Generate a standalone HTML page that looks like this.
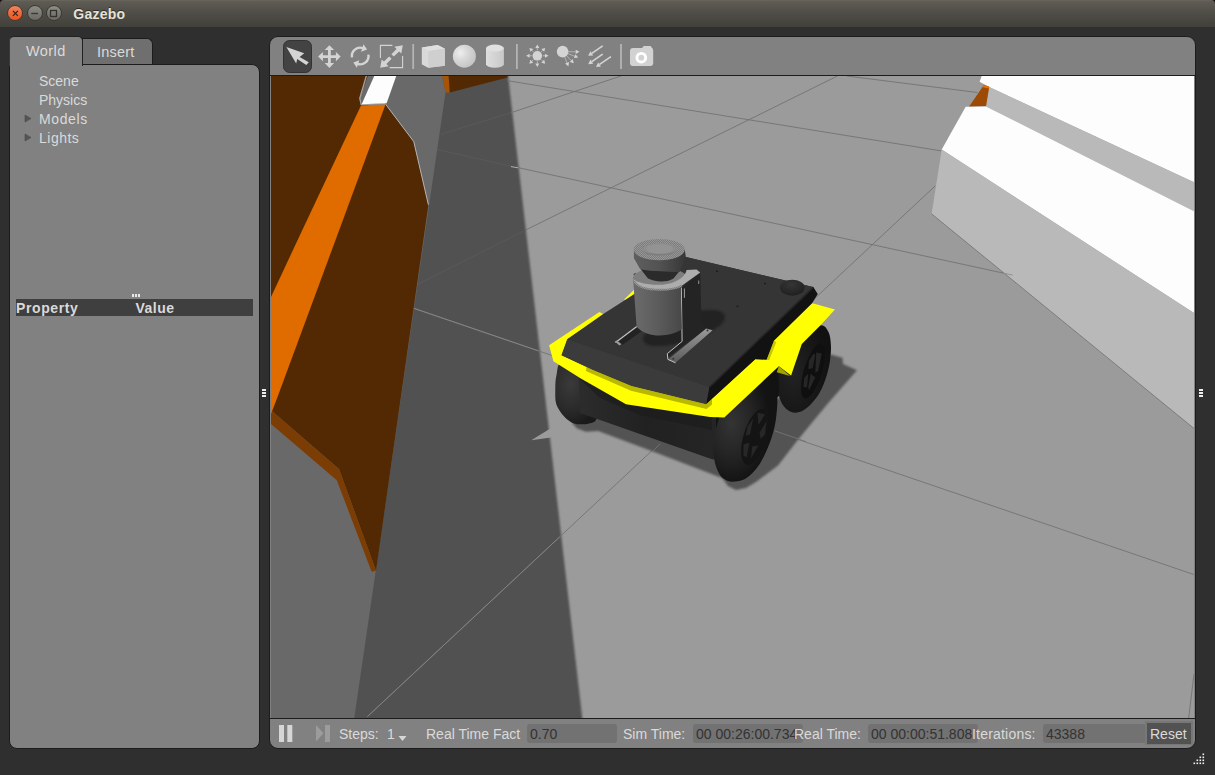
<!DOCTYPE html>
<html>
<head>
<meta charset="utf-8">
<title>Gazebo</title>
<style>
html,body{margin:0;padding:0;}
body{width:1215px;height:775px;overflow:hidden;background:#2f2f2f;position:relative;font-family:"Liberation Sans",sans-serif;color:#dadada;}
.abs{position:absolute;}
#titlebar{left:0;top:0;width:1215px;height:27px;background:linear-gradient(#6a685e 0px,#5e5c54 1.5px,#54524b 9px,#494842 18px,#41403b 27px);border-radius:4px 4px 0 0;}
#corners{left:0;top:0;width:1215px;height:8px;background:#1e0a14;}
#title{left:73.3px;top:5.8px;font-weight:bold;font-size:14px;color:#e6e2d8;letter-spacing:0.25px;line-height:17px;text-shadow:0 -1px 0 rgba(0,0,0,.45);}
.wb{width:16px;height:16px;border-radius:50%;top:5.4px;box-sizing:border-box;}
.t{white-space:nowrap;line-height:16px;font-size:14px;}
#leftpanel{left:9px;top:64px;width:251px;height:685px;background:#818181;border:1px solid #1c1c1c;border-radius:0 8px 8px 8px;box-sizing:border-box;}
#tabworld{left:9px;top:36px;width:74px;height:30px;background:#818181;border:1px solid #222;border-left-color:#3a3a3a;border-bottom:none;border-radius:5px 5px 0 0;box-sizing:border-box;}
#tabinsert{left:82px;top:38px;width:71px;height:26px;background:#6f6f6f;border:1px solid #1c1c1c;border-bottom:none;border-radius:0 6px 0 0;box-sizing:border-box;}
#render{left:269px;top:36px;width:927px;height:713px;background:#818181;border:1px solid #1c1c1c;border-radius:9px;box-sizing:border-box;}
.fld{background:#727272;border-radius:3px;height:19px;top:724px;color:#333;overflow:hidden;}
.fld span{position:absolute;left:3px;top:2px;}
</style>
</head>
<body>
<div id="corners" class="abs"></div>
<div id="titlebar" class="abs"></div>
<div class="abs wb" style="left:7.4px;background:linear-gradient(#f28560,#ee6a3c 50%,#ec5620);border:1px solid #4a3a30;"></div>
<div class="abs wb" style="left:26.6px;background:linear-gradient(#8e8d86,#6a6962);border:1px solid #3a3934;"></div>
<div class="abs wb" style="left:45.5px;background:linear-gradient(#8e8d86,#6a6962);border:1px solid #3a3934;"></div>
<svg class="abs" style="left:0;top:0" width="70" height="27" viewBox="0 0 70 27">
<path d="M12.9 10.9 L17.9 15.9 M17.9 10.9 L12.9 15.9" stroke="#3c241c" stroke-width="1.3" fill="none"/>
<path d="M31.2 13.5 H38" stroke="#3a3934" stroke-width="1.4" fill="none"/>
<rect x="50.5" y="10.5" width="6" height="6" stroke="#33322d" stroke-width="1.3" fill="none"/>
</svg>
<div id="title" class="abs">Gazebo</div>

<!-- left panel -->
<div id="leftpanel" class="abs"></div>
<div id="tabinsert" class="abs"></div>
<div id="tabworld" class="abs"></div>
<div class="abs t" id="tWorld" style="left:26px;top:43px;font-size:14.5px;letter-spacing:0.4px;">World</div>
<div class="abs t" id="tInsert" style="left:97px;top:44px;font-size:14.5px;letter-spacing:0.2px;">Insert</div>
<div class="abs t" id="tScene" style="left:39px;top:73px;">Scene</div>
<div class="abs t" id="tPhysics" style="left:39px;top:92px;">Physics</div>
<div class="abs t" id="tModels" style="left:39px;top:111px;letter-spacing:0.6px;">Models</div>
<div class="abs t" id="tLights" style="left:39px;top:130px;letter-spacing:0.5px;">Lights</div>
<svg class="abs" style="left:20px;top:110px" width="16" height="36" viewBox="0 0 16 36">
<path d="M5 5 L11 8.5 L5 12Z M5 24 L11 27.5 L5 31Z" fill="#555" stroke="#4a4a4a" stroke-width="0.6"/>
</svg>
<div class="abs" style="left:131.5px;top:294px;width:2px;height:3px;background:#e8e8e8;box-shadow:3px 0 0 #e8e8e8,6px 0 0 #e8e8e8;"></div>
<div class="abs" style="left:16px;top:299px;width:237px;height:17px;background:#3f3f3f;"></div>
<div class="abs t" id="tProperty" style="left:16px;top:300px;font-weight:bold;letter-spacing:0.6px;">Property</div>
<div class="abs t" id="tValue" style="left:135.5px;top:300px;font-weight:bold;letter-spacing:0.5px;">Value</div>

<!-- splitter handles -->
<div class="abs" style="left:262px;top:389px;width:4px;height:2px;background:#eee;box-shadow:0 3px 0 #eee,0 6px 0 #eee;"></div>
<div class="abs" style="left:1199px;top:389px;width:4px;height:2px;background:#eee;box-shadow:0 3px 0 #eee,0 6px 0 #eee;"></div>

<!-- render widget -->
<div id="render" class="abs"></div>

<svg class="abs" style="left:271px;top:76px" width="923" height="642" viewBox="271 76 923 642" shape-rendering="auto">
<defs>
<filter id="shb" x="-5%" y="-5%" width="110%" height="110%"><feGaussianBlur stdDeviation="1.3 0.1"/></filter>
<linearGradient id="shEdge" gradientUnits="userSpaceOnUse" x1="0" y1="0" x2="4" y2="0"><stop offset="0" stop-color="#525252"/><stop offset="1" stop-color="#9b9b9b"/></linearGradient>
</defs>
<!-- ground -->
<rect x="271" y="76" width="923" height="642" fill="#9b9b9b"/>
<!-- shadow -->
<polygon points="420,56 505.8,56 584.6,738 330,738 420,92.5" fill="#515151" filter="url(#shb)"/>
<polygon points="531.2,440.2 550,428.8 553,428.5 553,437.2" fill="#9b9b9b"/>
<!-- grid lines -->
<g stroke="#737373" stroke-width="0.9" fill="none">
<line x1="507.5" y1="80.7" x2="941.2" y2="150.9"/>
<line x1="510.7" y1="112.8" x2="621" y2="76"/>
<line x1="525.7" y1="230" x2="837.4" y2="76"/>
<line x1="517" y1="167.4" x2="1013" y2="275.2"/>
<line x1="847" y1="76" x2="977.5" y2="92.5"/>
<line x1="935.1" y1="186" x2="367.4" y2="716.6"/>
<line x1="412.3" y1="307.8" x2="1194" y2="574.6"/>
<line x1="1188.7" y1="718" x2="1194" y2="674"/>
</g>
<g stroke="#5a5a5a" stroke-width="0.9" fill="none">
<line x1="441.2" y1="134.2" x2="510.7" y2="112.8"/>
<line x1="415.5" y1="285.3" x2="525.7" y2="230"/>
<line x1="435.8" y1="149.2" x2="511" y2="166.2"/>
</g>
<line x1="511" y1="166.6" x2="518" y2="167.8" stroke="#b0b0b0" stroke-width="1"/>
<g stroke="#868686" stroke-width="0.9"><line x1="367.4" y1="716.6" x2="559.6" y2="537"/><line x1="412.3" y1="307.8" x2="538.3" y2="350.8"/></g>
<!-- mid grey -->
<polygon points="271,76 442.3,76 445.5,92.5 354.5,716.6 354.3,718 271,718" fill="#696969"/>
<!-- brown box -->
<polygon points="271,76 396.3,76 385.6,104.2 413.8,141.7 428.4,204.8 376,570.7 339,469 271,410.3" fill="#522902"/>
<polygon points="271,410.3 339,469 376,570.7 371.6,571.8 336.8,480.2 271,424" fill="#7c3d05"/>
<polyline points="385.6,104.2 413.8,141.7 428.4,204.8" fill="none" stroke="#b4b4b4" stroke-width="1"/>
<!-- orange band -->
<polygon points="361,105.5 385.6,104.2 337.4,235 276.4,400 271,414 271,297 300,235" fill="#e06c00"/>
<!-- white quad top -->
<polygon points="367.8,76 374.5,76 362,104 360,98" fill="#6a6a6a"/>
<polyline points="366.6,75 359.8,98.2 361.2,104.6 385.6,103.8" fill="none" stroke="#a0a0a0" stroke-width="1.4"/>
<polygon points="374.2,76 396.3,76 386.6,103.2 361.6,104.2" fill="#fdfdfd"/>
<!-- top orange sliver + brown triangle -->
<polygon points="442.3,76 448.7,76 449.8,92.5 445.5,92.5" fill="#a85306"/>
<polygon points="448.7,76 507.5,76 507.5,77.5 449.8,92.5" fill="#522902"/>
<!-- white boxes right -->
<polygon points="981.7,76 1194,76 1194,182.3 989.2,87.1 979.6,81.8" fill="#fdfdfd"/>
<polygon points="989.2,87.1 1194,182.3 1194,211.2 986,106.4" fill="#b9b9b9"/>
<polygon points="983.9,85 989.2,86.7 986,106 968.9,106.8" fill="#9c4a04"/>
<polygon points="983.9,85 989.2,86.7 988.9,88.5 982.5,87.2" fill="#e87000"/>
<polygon points="965.7,106.8 986,106.4 1194,211.2 1194,313 941.7,149.6" fill="#fdfdfd"/>
<polygon points="941.7,149.6 1194,313 1194,428.5 931.6,213.9" fill="#b9b9b9"/>
<line x1="931.6" y1="213.9" x2="1194" y2="428.5" stroke="#777" stroke-width="0.9"/>
<line x1="1003" y1="273" x2="1012.8" y2="275.2" stroke="#8c8c8c" stroke-width="0.9"/>
<defs>
<filter id="b1" x="-10%" y="-10%" width="120%" height="120%"><feGaussianBlur stdDeviation="1.1"/></filter>
<filter id="b2" x="-20%" y="-20%" width="140%" height="140%"><feGaussianBlur stdDeviation="1.6"/></filter>
<linearGradient id="gBody" x1="0" y1="0" x2="1" y2="0"><stop offset="0" stop-color="#2c2c2c"/><stop offset="0.5" stop-color="#212121"/><stop offset="1" stop-color="#252525"/></linearGradient>
<linearGradient id="gCyl" x1="0" y1="0" x2="1" y2="0"><stop offset="0" stop-color="#6b6b6b"/><stop offset="0.45" stop-color="#5e5e5e"/><stop offset="1" stop-color="#484848"/></linearGradient>
<linearGradient id="gCap" x1="0" y1="0" x2="1" y2="0"><stop offset="0" stop-color="#5e5e5e"/><stop offset="0.5" stop-color="#525252"/><stop offset="1" stop-color="#363636"/></linearGradient>
<linearGradient id="gFoot" x1="0" y1="0" x2="0" y2="1"><stop offset="0" stop-color="#9a9a9a"/><stop offset="1" stop-color="#5c5c5c"/></linearGradient>
<radialGradient id="gGps" cx="0.45" cy="0.3" r="0.7"><stop offset="0" stop-color="#353535"/><stop offset="1" stop-color="#202020"/></radialGradient>
<radialGradient id="gTyreF" cx="0.28" cy="0.42" r="0.6"><stop offset="0" stop-color="#343434"/><stop offset="0.55" stop-color="#242424"/><stop offset="1" stop-color="#131313"/></radialGradient>
<radialGradient id="gTyreL" cx="0.35" cy="0.35" r="0.7"><stop offset="0" stop-color="#3a3a3a"/><stop offset="0.6" stop-color="#2a2a2a"/><stop offset="1" stop-color="#191919"/></radialGradient>
<radialGradient id="gTyreR" cx="0.3" cy="0.55" r="0.7"><stop offset="0" stop-color="#222"/><stop offset="1" stop-color="#111"/></radialGradient>
<pattern id="hatch" width="2" height="2" patternUnits="userSpaceOnUse"><rect width="2" height="2" fill="#7c7c7c"/><rect width="1" height="1" fill="#969696"/><rect x="1" y="1" width="1" height="1" fill="#969696"/></pattern>
</defs>
<g id="robot">
<!-- ground shadows -->
<g fill="#535353" filter="url(#b1)">
<polygon points="572,423 577,428.5 586,431.8 598.2,431 653,451.5 722,478 728,486 736,490 746,488 756,482 778,465.5 797,441 812.5,422 828.5,402.8 857,370.2 843,364 842.5,357.8 830.7,354.6 800,380 740,430 600,400"/>
</g>
<line x1="774.6" y1="430.8" x2="806" y2="441.6" stroke="#747474" stroke-width="0.9"/>
<line x1="652.8" y1="451.4" x2="660" y2="443.8" stroke="#747474" stroke-width="0.9"/>
<!-- rear right wheel -->
<path d="M800.0 335.0 C806.8 329.2 815.8 325.7 820.5 325.2 C825.2 324.7 826.8 328.8 828.5 332.1 C830.2 335.4 830.6 340.4 830.9 345.0 C831.2 349.6 830.8 354.8 830.1 360.0 C829.4 365.2 828.2 370.6 826.5 376.0 C824.8 381.4 822.4 387.6 820.0 392.1 C817.6 396.6 814.8 399.9 812.0 403.0 C809.2 406.1 806.1 408.9 803.0 410.5 C799.9 412.1 796.4 413.2 793.2 412.5 C790.0 411.8 786.5 409.6 784.0 406.5 C781.5 403.4 779.7 398.8 778.5 394.0 C777.3 389.2 776.8 383.7 777.0 378.0 C777.2 372.3 776.2 367.2 780.0 360.0 C783.8 352.8 793.2 340.8 800.0 335.0Z" fill="url(#gTyreR)"/>
<ellipse cx="813" cy="371" rx="9" ry="28.5" transform="rotate(17 813 371)" fill="#0f0f0f"/>
<g fill="#262626">
<polygon points="808.9,360.9 813.5,353.5 815.3,355.3 812.6,368.2 808.3,369.1"/>
<polygon points="816.2,352.6 821.8,353.5 818.1,371 815.3,372.8"/>
<polygon points="804.3,377.4 808.3,373.8 807,387.6 803.3,386.7"/>
<polygon points="810.7,373.8 815.3,377.4 808.9,390.4 808.3,386.7"/>
</g>
<!-- front left wheel -->
<path d="M562.0 362.0 C557.2 362.8 557.6 370.4 556.5 375.0 C555.4 379.6 555.3 384.5 555.3 389.4 C555.3 394.3 554.9 399.8 556.3 404.2 C557.7 408.6 561.4 413.2 563.7 416.1 C566.0 419.0 567.8 420.1 570.0 421.5 C572.2 422.9 573.9 423.9 577.1 424.2 C580.3 424.5 585.8 424.4 589.0 423.5 C592.2 422.6 594.9 422.9 596.4 419.0 C597.9 415.1 599.9 408.2 598.0 400.0 C596.1 391.8 591.0 376.3 585.0 370.0 C579.0 363.7 566.8 361.2 562.0 362.0Z" fill="url(#gTyreL)"/>
<!-- body -->
<polygon points="712,400 778,366 779,396 714,446" fill="#121212"/>
<polygon points="578.6,370 580,413.1 712,459.3 716,459.5 716,400" fill="url(#gBody)"/>
<polygon points="578.6,378 626,404.3 712,417.5 712,430 640,415 600,398" fill="#1c1c1c" opacity="0.7"/>
<!-- front right wheel -->
<path d="M740.0 395.0 C732.0 400.3 726.2 405.0 722.0 412.0 C717.8 419.0 715.8 429.1 714.5 436.8 C713.2 444.5 713.4 452.1 714.1 458.2 C714.8 464.3 717.1 469.6 718.9 473.2 C720.7 476.8 722.7 478.1 725.0 479.5 C727.3 480.9 729.3 481.9 732.8 481.7 C736.2 481.5 741.4 481.2 745.7 478.5 C750.0 475.8 754.6 471.4 758.5 465.7 C762.4 460.0 766.3 451.8 769.2 444.3 C772.1 436.8 774.4 429.4 775.7 420.7 C777.0 412.0 778.1 398.9 777.1 392.1 C776.1 385.3 776.2 379.5 770.0 380.0 C763.8 380.5 748.0 389.7 740.0 395.0Z" fill="url(#gTyreF)"/>
<ellipse cx="755" cy="437" rx="11.5" ry="29" transform="rotate(17 755 437)" fill="#141414"/>
<g fill="#272727">
<polygon points="753.2,418.6 750,434.6 745.7,435.7 747.8,426"/>
<polygon points="757.5,412.7 765,414.3 758.5,425"/>
<polygon points="766.6,421.2 765,434.6 760.7,438.9 759.6,432.5"/>
<polygon points="743.5,444.3 749.4,442.7 746.8,457.1 743.5,456"/>
<polygon points="752.1,446.4 758.5,445.3 751,458.2"/>
</g>
<!-- yellow -->
<polygon points="549.1,345.2 599.4,312 603.2,314.1 590,340 650,350 740,340 790,300 812.5,303.2 835,309.6 820.5,325.2 801.8,343.9 791.1,375.5 778.9,366.2 724.3,417.6 710,417.1 626,404.3 580,378 553.4,361.2" fill="#ffff00"/>
<polygon points="624.1,299.6 634.5,289.3 634.5,295 626,301" fill="#ffff00"/>
<polygon points="586,371 586.5,367 592.9,370 631.4,386.1 706.1,404.3 712,399 712,404.5 706.5,409 631,390.8 592,373.8" fill="#b9b900"/>
<polygon points="778.9,366.2 790.1,375.9 776.7,372.3" fill="#a4a400"/>
<polygon points="773.9,340.7 776.3,342 769.2,360.2 766.6,359.8" fill="#c8c800"/>
<!-- side band / plate -->
<polygon points="567.3,339.3 634.2,294.3 685.9,257.1 813.2,287.1 817.2,294.1 811.6,303 773.4,340.5 766.2,359.3 755.3,358.8 706.1,403.8 631.4,385.6 592.9,369.5 561.9,355.3" fill="#303030"/>
<polygon points="813.2,287.1 817.7,294.1 812.1,303.2 773.9,340.7 766.6,359.8 755.3,359.3 706.1,404.3 709.3,387.1" fill="#121212"/>
<polygon points="567.3,339.3 603.2,314.1 634.2,294.3 660,270 685.9,257.1 813.2,287.1 709.3,387.1" fill="#353535"/>
<polygon points="567.3,339.3 709.3,387.1 706.1,404.3 631.4,386.1 592.9,370 561.4,355.3" fill="#3b3b3b"/>
<line x1="813" y1="287.6" x2="709.6" y2="387" stroke="#262626" stroke-width="1.6"/>
<!-- gps -->
<ellipse cx="792.3" cy="287.7" rx="12.3" ry="8" fill="url(#gGps)"/>
<g fill="#1d1d1d"><rect x="716" y="270.6" width="2" height="1.4"/><rect x="736.4" y="305.6" width="2.2" height="1.4"/><rect x="764" y="282.8" width="2" height="1.4"/><rect x="704" y="322.6" width="1.6" height="1.6"/></g>
<!-- cylinder shadow on plate -->
<ellipse cx="684" cy="328" rx="43" ry="13.5" transform="rotate(-17 684 328)" fill="#242424" filter="url(#b1)"/>
<!-- bracket left leg -->
<polygon points="636.6,327 642,331 621.4,345.4 615,343" fill="#222"/>
<line x1="636.8" y1="326.6" x2="615.5" y2="342.6" stroke="#c4c4c4" stroke-width="1.2"/>
<polygon points="614.6,341.6 617,340.6 621.6,344.2 619.5,345.6" fill="#9a9a9a"/>
<!-- bracket right -->
<polygon points="681.6,287 700.3,273 701.4,322 706.2,328.6 668.5,357 667.1,353.7 682.1,341.4" fill="#242424"/>
<polygon points="706.2,328.6 712.6,330.2 675.5,362.8 668,359.5" fill="url(#gFoot)"/>
<polyline points="681.3,287.5 682.1,341.4 667.3,353.7 667.9,359.4 675.5,362.8" fill="none" stroke="#c2c2c2" stroke-width="1"/>
<line x1="684.4" y1="288.5" x2="684.4" y2="297.8" stroke="#b0b0b0" stroke-width="0.9"/>
<line x1="698.7" y1="280.5" x2="698.7" y2="284" stroke="#a0a0a0" stroke-width="0.9"/>
<circle cx="673.3" cy="358.7" r="1" fill="#333"/><circle cx="707.5" cy="330.6" r="1" fill="#333"/>
<!-- laser body -->
<path d="M633 277 L636.6 326.4 C642 333 652 335.6 659.6 335.5 C668 335.4 677 333 681.8 329 L680.8 283 Z" fill="url(#gCyl)"/>
<ellipse cx="660.2" cy="278.5" rx="27.3" ry="11" fill="#7e7e7e"/>
<path d="M633 279 C636 286.5 648 289.8 660 289.8 C670 289.8 678 288 682 285.5 L700.2 272.6 L696.5 269.6 L686.5 270 C686 276 676 284.5 660 284.8 C646 285 636 282 633 279Z" fill="#adadad"/>
<path d="M634 281.5 C638 287.5 648 289.8 660 289.8 C670 289.8 678 288 682 285.5" fill="none" stroke="url(#hatch)" stroke-width="2"/>
<line x1="633.6" y1="274.6" x2="635.5" y2="273.4" stroke="#2a2a2a" stroke-width="1"/>
<!-- laser cap -->
<path d="M639.5 267.5 L680 270.5 L673.5 278.5 C669 281 665 281.6 661.2 281.5 C656 281.4 651 280.4 647.8 278.3 Z" fill="#2b2b2b"/>
<path d="M633.9 250 L633.9 258.2 L640.3 269.2 C646 270.4 654 271 661 271.2 C668 271.6 675 272.2 679.6 272 L685.9 257.3 L684.8 250 Z" fill="url(#gCap)"/>
<ellipse cx="659.3" cy="249.6" rx="25.5" ry="10.7" fill="url(#hatch)"/>
<ellipse cx="659.6" cy="249.2" rx="17" ry="6.2" fill="#8c8c8c"/>
<path d="M642.8 250.2 C645 254.5 652 255.6 659.6 255.5 C668 255.4 674.5 254 676.4 250.4 C674 252.8 667 254 659.6 254 C652 254 645.5 253 642.8 250.2Z" fill="#7c7c7c"/>
<ellipse cx="659.6" cy="248.8" rx="13.5" ry="4.6" fill="#939393"/>
</g>

</svg>


<svg class="abs" style="left:270px;top:37px" width="400" height="38" viewBox="270 37 400 38">
<defs><radialGradient id="gSph" cx="0.33" cy="0.36" r="0.7"><stop offset="0" stop-color="#eeeeee"/><stop offset="0.45" stop-color="#d8d8d8"/><stop offset="1" stop-color="#c4c4c4"/></radialGradient><linearGradient id="gCy" x1="0" y1="0" x2="1" y2="0"><stop offset="0" stop-color="#dedede"/><stop offset="1" stop-color="#c8c8c8"/></linearGradient></defs>
<rect x="283.5" y="40.5" width="28" height="32" rx="6" ry="6" fill="#434343" stroke="#323232" stroke-width="1"/>
<polygon points="286.4,46.9 304.2,53.3 299.6,56.9 308.8,62.2 306.3,64.9 297.2,59 296.2,63.4" fill="#d4d4d4"/>
<polygon points="330.8,55.2 335.9,55.2 335.9,51.9 340.7,56.6 335.9,61.3 335.9,58.0 330.8,58.0 330.8,58.0 330.8,63.1 334.1,63.1 329.4,67.9 324.7,63.1 328.0,63.1 328.0,58.0 328.0,58.0 322.9,58.0 322.9,61.3 318.1,56.6 322.9,51.9 322.9,55.2 328.0,55.2 328.0,55.2 328.0,50.1 324.7,50.1 329.4,45.3 334.1,50.1 330.8,50.1 330.8,55.2" fill="#d4d4d4"/>
<path d="M352.0 57.4 A8.3 8.3 0 0 1 363.0 48.2" fill="none" stroke="#d4d4d4" stroke-width="2.4"/>
<path d="M368.4 54.6 A8.3 8.3 0 0 1 357.4 63.8" fill="none" stroke="#d4d4d4" stroke-width="2.4"/>
<polygon points="367.1,49.5 363.5,44.2 361.1,51.7" fill="#d4d4d4"/>
<polygon points="353.3,62.5 356.9,67.8 359.3,60.3" fill="#d4d4d4"/>
<path d="M380.4 57.9 V45.4 H392.4 M389.6 67.6 H402.6 V56.099999999999994" fill="none" stroke="#d4d4d4" stroke-width="1.1"/>
<polygon points="393.8,56.6 399.1,51.4 401.3,53.6 402.8,45.2 394.4,46.7 396.6,48.9 391.4,54.2" fill="#d4d4d4"/>
<polygon points="389.2,56.4 383.9,61.6 381.7,59.4 380.2,67.8 388.6,66.3 386.4,64.1 391.6,58.8" fill="#d4d4d4"/>
<rect x="412.3" y="44" width="1.8" height="25" fill="#b4b4b4"/>
<rect x="516.0" y="44" width="1.8" height="25" fill="#b4b4b4"/>
<rect x="620.1" y="44" width="1.8" height="25" fill="#b4b4b4"/>
<polygon points="421.9,47.5 437.7,45 444.9,48.7 444.9,65.7 428.4,67.7 421.9,64.2" fill="#d4d4d4"/>
<polygon points="421.9,47.5 437.7,45 444.9,48.7 428.4,51" fill="#dfdfdf"/>
<polygon points="421.9,47.5 428.4,51 428.4,67.7 421.9,64.2" fill="#d8d8d8"/>
<polygon points="428.4,51 444.9,48.7 444.9,65.7 428.4,67.7" fill="#cfcfcf"/>
<circle cx="464.4" cy="56.2" r="11.5" fill="url(#gSph)"/>
<path d="M486 48.1 V64.2 A8.95 3.5 0 0 0 503.9 64.2 V48.1Z" fill="url(#gCy)"/>
<ellipse cx="494.95" cy="48.1" rx="8.95" ry="3.5" fill="#e0e0e0"/>
<circle cx="537.3" cy="55.8" r="4.8" fill="#d4d4d4"/>
<line x1="542.8" y1="55.8" x2="545.0" y2="55.8" stroke="#d4d4d4" stroke-width="0.7"/><polygon points="548.5,55.8 545.0,57.8 545.0,53.8" fill="#d4d4d4"/>
<line x1="541.2" y1="59.7" x2="542.7" y2="61.2" stroke="#d4d4d4" stroke-width="0.7"/><polygon points="545.2,63.7 541.3,62.7 544.2,59.8" fill="#d4d4d4"/>
<line x1="537.3" y1="61.3" x2="537.3" y2="63.5" stroke="#d4d4d4" stroke-width="0.7"/><polygon points="537.3,67.0 535.3,63.5 539.3,63.5" fill="#d4d4d4"/>
<line x1="533.4" y1="59.7" x2="531.9" y2="61.2" stroke="#d4d4d4" stroke-width="0.7"/><polygon points="529.4,63.7 530.4,59.8 533.3,62.7" fill="#d4d4d4"/>
<line x1="531.8" y1="55.8" x2="529.6" y2="55.8" stroke="#d4d4d4" stroke-width="0.7"/><polygon points="526.1,55.8 529.6,53.8 529.6,57.8" fill="#d4d4d4"/>
<line x1="533.4" y1="51.9" x2="531.9" y2="50.4" stroke="#d4d4d4" stroke-width="0.7"/><polygon points="529.4,47.9 533.3,48.9 530.4,51.8" fill="#d4d4d4"/>
<line x1="537.3" y1="50.3" x2="537.3" y2="48.1" stroke="#d4d4d4" stroke-width="0.7"/><polygon points="537.3,44.6 539.3,48.1 535.3,48.1" fill="#d4d4d4"/>
<line x1="541.2" y1="51.9" x2="542.7" y2="50.4" stroke="#d4d4d4" stroke-width="0.7"/><polygon points="545.2,47.9 544.2,51.8 541.3,48.9" fill="#d4d4d4"/>
<circle cx="562.6" cy="51.6" r="5.8" fill="#d4d4d4"/>
<line x1="562.6" y1="51.6" x2="575.7" y2="51.8" stroke="#d4d4d4" stroke-width="0.6"/><polygon points="579.5,51.8 575.7,53.9 575.7,49.7" fill="#d4d4d4"/>
<line x1="562.6" y1="51.6" x2="574.6" y2="56.2" stroke="#d4d4d4" stroke-width="0.6"/><polygon points="578.2,57.5 573.9,58.1 575.4,54.2" fill="#d4d4d4"/>
<line x1="562.6" y1="51.6" x2="571.2" y2="60.6" stroke="#d4d4d4" stroke-width="0.6"/><polygon points="573.8,63.3 569.7,62.0 572.7,59.1" fill="#d4d4d4"/>
<line x1="562.6" y1="51.6" x2="567.0" y2="62.9" stroke="#d4d4d4" stroke-width="0.6"/><polygon points="568.4,66.4 565.1,63.6 569.0,62.1" fill="#d4d4d4"/>
<line x1="602.7" y1="45.8" x2="591.8" y2="53.3" stroke="#d4d4d4" stroke-width="1.6"/><polygon points="588.2,55.8 590.4,51.2 593.2,55.4" fill="#d4d4d4"/>
<line x1="602.7" y1="54.2" x2="591.8" y2="61.7" stroke="#d4d4d4" stroke-width="1.6"/><polygon points="588.2,64.2 590.4,59.6 593.2,63.8" fill="#d4d4d4"/>
<line x1="611.0" y1="56.7" x2="599.6" y2="64.4" stroke="#d4d4d4" stroke-width="1.6"/><polygon points="596.0,66.9 598.2,62.4 601.0,66.5" fill="#d4d4d4"/>
<path d="M633 48.1 H642.2 L643.6 46.1 H650.6 L652 48.1 A1.2 3 0 0 1 653.2 51 V63 A3 3 0 0 1 650.2 66 H633 A3 3 0 0 1 630 63 V51.1 A3 3 0 0 1 633 48.1Z" fill="#d2d2d2"/>
<circle cx="641.3" cy="57.7" r="4.35" fill="none" stroke="#fff" stroke-width="2.9"/>
</svg>

<div class="abs" style="left:270px;top:75px;width:925px;height:1px;background:#1c1c1c;"></div>

<!-- bottom bar -->
<div class="abs" style="left:270px;top:718px;width:925px;height:1px;background:#1c1c1c;"></div>
<svg class="abs" style="left:270px;top:719px" width="140" height="29" viewBox="270 719 140 29">
<rect x="279" y="725" width="5" height="17" fill="#d6d6d6"/><rect x="287.3" y="725" width="5" height="17" fill="#d6d6d6"/>
<path d="M316 725 L323.5 733.3 L316 741.6Z" fill="#9c9c9c"/><rect x="325" y="725" width="5" height="17" fill="#9c9c9c"/>
<path d="M398.5 736 H406.5 L402.5 741Z" fill="#d6d6d6"/>
</svg>
<div class="abs t" id="bSteps" style="left:339px;top:726px;">Steps:</div>
<div class="abs t" id="bOne" style="left:387px;top:726px;">1</div>
<div class="abs t" id="bRTF" style="left:426px;top:726px;">Real Time Fact</div>
<div class="abs fld t" style="left:527px;width:90px;"><span id="f1">0.70</span></div>
<div class="abs t" id="bSim" style="left:623px;top:726px;">Sim Time:</div>
<div class="abs fld t" style="left:693px;width:110px;"><span id="f2">00 00:26:00.734</span></div>
<div class="abs t" id="bReal" style="left:794px;top:726px;">Real Time:</div>
<div class="abs fld t" style="left:868px;width:110px;"><span id="f3">00 00:00:51.808</span></div>
<div class="abs t" id="bIter" style="left:972px;top:726px;letter-spacing:0.2px;">Iterations:</div>
<div class="abs fld t" style="left:1043px;width:104px;border-radius:3px 0 0 3px;"><span id="f4">43388</span></div>
<div class="abs" style="left:1145px;top:721px;width:48px;height:24px;background:#777;"></div>
<div class="abs" style="left:1147px;top:723px;width:44px;height:21px;background:#525252;"></div>
<div class="abs t" id="bReset" style="left:1150px;top:726px;">Reset</div>

<!-- resize grip -->
<svg class="abs" style="left:1193.3px;top:752px" width="14" height="14" viewBox="0 0 14 14">
<g fill="#f0f0f0"><rect x="9.5" y="1.5" width="1.6" height="1.6"/><rect x="6.5" y="4.5" width="1.6" height="1.6"/><rect x="9.5" y="4.5" width="1.6" height="1.6"/><rect x="3.5" y="7.5" width="1.6" height="1.6"/><rect x="6.5" y="7.5" width="1.6" height="1.6"/><rect x="9.5" y="7.5" width="1.6" height="1.6"/><rect x="0.5" y="10.5" width="1.6" height="1.6"/><rect x="3.5" y="10.5" width="1.6" height="1.6"/><rect x="6.5" y="10.5" width="1.6" height="1.6"/><rect x="9.5" y="10.5" width="1.6" height="1.6"/></g>
</svg>
</body>
</html>
